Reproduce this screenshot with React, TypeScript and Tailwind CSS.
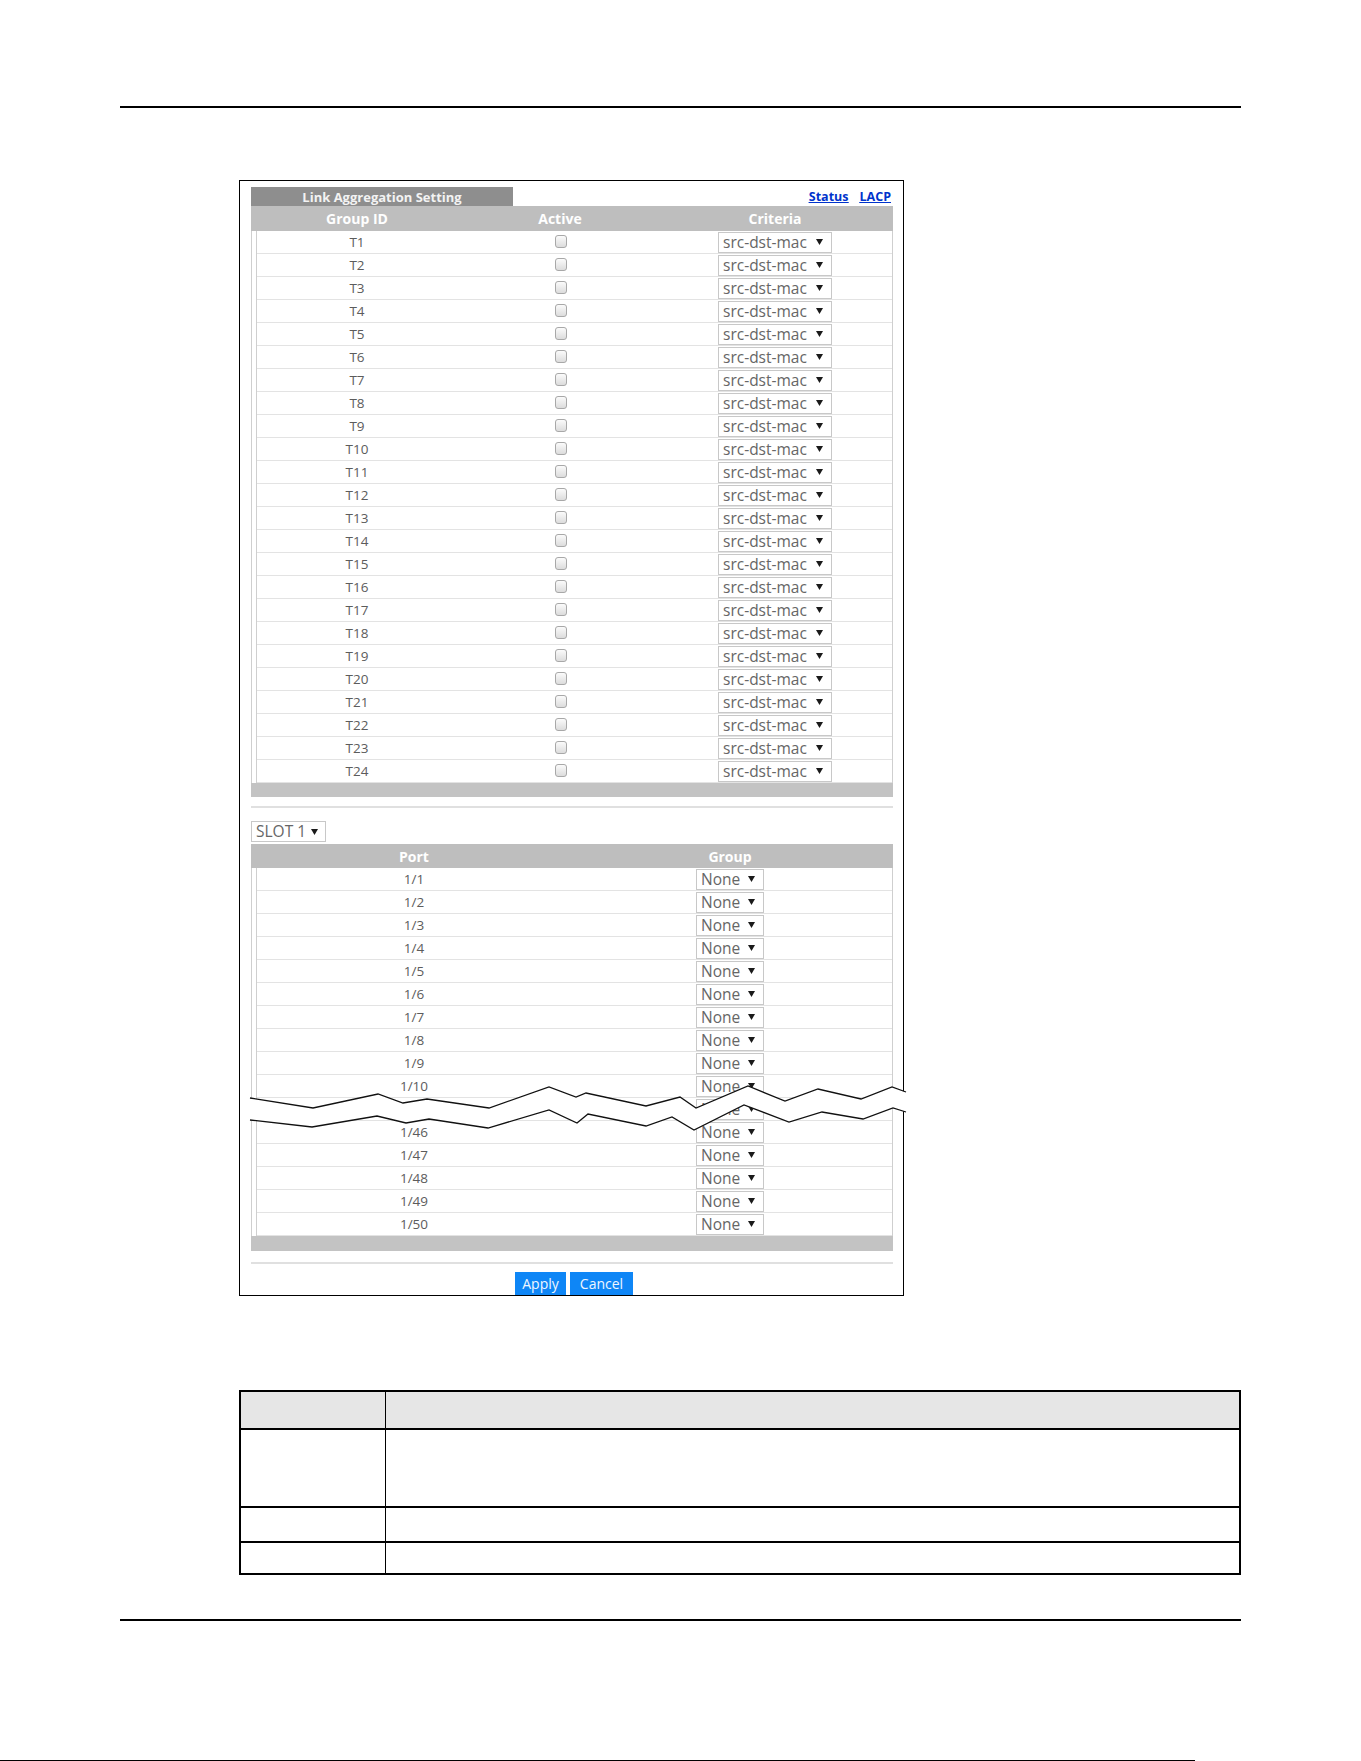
import type { ReactNode } from 'react';

const trunkGroups = Array.from({ length: 24 }, (_, i) => `T${i + 1}`);
const ports = [1, 2, 3, 4, 5, 6, 7, 8, 9, 10, 11, 46, 47, 48, 49, 50].map((n) => `1/${n}`);

// zig-zag "cut" across the port list
const upperEdge =
  '250,1098 313,1108 378,1094 403,1103 427,1099 489,1108 549,1087 576,1097 586,1093 646,1106 680,1097 696,1108 748,1086 785,1101 818,1089 861,1099 892,1087 906,1092';
const lowerEdge =
  '250,1120 312,1127 377,1116 406,1123 429,1119 488,1128 549,1110 577,1123 588,1114 646,1126 672,1117 694,1130 744,1105 789,1122 822,1112 863,1119 893,1108 906,1112';
const breakFill = `${upperEdge} ${lowerEdge.split(' ').reverse().join(' ')}`;

function Caret() {
  return (
    <svg width="7" height="6" viewBox="0 0 7 6" className="shrink-0">
      <path d="M0 0h7L3.5 6z" fill="#1a1a1a" />
    </svg>
  );
}

function Dropdown({ value, className }: { value: string; className: string }) {
  return (
    <div
      className={`flex h-[21px] items-center border border-[#c8c8c8] bg-white pl-[4px] leading-none text-[#666] ${className}`}
    >
      <span className="pt-[1px] text-[15.5px]">{value}</span>
      <Caret />
    </div>
  );
}

function Checkbox() {
  return (
    <div className="mb-[1px] h-[13px] w-[12px] rounded-[3px] border border-[#a8a8a8] bg-gradient-to-b from-[#fbfbfb] to-[#dcdcdc]" />
  );
}

function RowFrame({ children }: { children: ReactNode }) {
  return (
    <div className="border-x border-[#cfcfcf]">
      <div className="ml-[4px] border-l border-[#cfcfcf]">{children}</div>
    </div>
  );
}

export default function App() {
  return (
    <div className="relative h-[1761px] w-[1361px] overflow-hidden bg-white pt-[106px] font-['Open_Sans',sans-serif]">
      <div className="ml-[120px] h-[2px] w-[1121px] bg-black" />

      {/* settings panel */}
      <div className="ml-[239px] mt-[72px] w-[665px] border border-black pb-0 pl-[11px] pr-[10px] pt-[6px]">
        <div className="flex h-[19px] items-center justify-between">
          <div className="flex h-[19px] w-[262px] items-center justify-center bg-[#8e8e8e] pt-[1px] text-[13px] font-bold leading-none text-[#f3f3f3]">
            Link Aggregation Setting
          </div>
          <div className="flex gap-[11px] pr-[2px] pt-[1px] text-[12.5px] font-bold leading-none text-[#0033cc] underline">
            <a href="#status">Status</a>
            <a href="#lacp">LACP</a>
          </div>
        </div>

        <div className="grid h-[25px] grid-cols-[212px_194px_1fr] items-center bg-[#bebebe] pt-[1px] text-center text-[14px] font-bold leading-none text-white">
          <span>Group ID</span>
          <span>Active</span>
          <span>Criteria</span>
        </div>
        <RowFrame>
          {trunkGroups.map((id) => (
            <div
              key={id}
              className="grid h-[23px] grid-cols-[200px_208px_1fr] items-center border-b border-[#e3e3e3]"
            >
              <span className="pt-[2px] text-center text-[13.5px] leading-none text-[#5c5c5c]">{id}</span>
              <div className="flex justify-center">
                <Checkbox />
              </div>
              <Dropdown value="src-dst-mac" className="ml-[53px] w-[114px] gap-[9px]" />
            </div>
          ))}
        </RowFrame>
        <div className="h-[14px] bg-[#c3c3c3]" />

        <div className="mt-[9px] h-[2px] bg-[#e0e0e0]" />

        <Dropdown value="SLOT 1" className="mt-[13px] h-[20px] w-[75px] gap-[5px]" />

        <div className="mt-[2px] grid h-[24px] grid-cols-[326px_306px_1fr] items-center bg-[#bebebe] pt-[1px] text-center text-[14px] font-bold leading-none text-white">
          <span>Port</span>
          <span>Group</span>
        </div>
        <RowFrame>
          {ports.map((port) => (
            <div
              key={port}
              className="grid h-[23px] grid-cols-[314px_1fr] items-center border-b border-[#e3e3e3]"
            >
              <span className="pt-[2px] text-center text-[13.5px] leading-none text-[#5c5c5c]">{port}</span>
              <Dropdown value="None" className="ml-[125px] w-[68px] gap-[8px]" />
            </div>
          ))}
        </RowFrame>
        <div className="h-[15px] bg-[#c3c3c3]" />

        <div className="mt-[11px] h-[2px] bg-[#e0e0e0]" />

        <div className="mt-[8px] flex justify-center gap-[4px] pl-[4px]">
          <button className="h-[23px] w-[51px] bg-[#0e86f6] pt-[1px] text-[14px] leading-none text-[#eef6ff]">Apply</button>
          <button className="h-[23px] w-[63px] bg-[#0e86f6] pt-[1px] text-[14px] leading-none text-[#eef6ff]">Cancel</button>
        </div>
      </div>

      {/* field description table */}
      <div className="ml-[239px] mt-[94px] w-[1002px] border-2 border-black">
        <div className="grid h-[38px] grid-cols-[145px_1fr] border-b-2 border-black bg-[#e6e6e6]">
          <div className="border-r border-black" />
          <div />
        </div>
        <div className="grid h-[78px] grid-cols-[145px_1fr] border-b-2 border-black">
          <div className="border-r border-black" />
          <div />
        </div>
        <div className="grid h-[35px] grid-cols-[145px_1fr] border-b-2 border-black">
          <div className="border-r border-black" />
          <div />
        </div>
        <div className="grid h-[30px] grid-cols-[145px_1fr]">
          <div className="border-r border-black" />
          <div />
        </div>
      </div>

      <div className="ml-[120px] mt-[44px] h-[2px] w-[1121px] bg-black" />
      <div className="mt-[139px] h-[2px] w-[1195px] bg-black" />

      <svg
        className="pointer-events-none absolute left-0 top-0"
        width="1361"
        height="1761"
        viewBox="0 0 1361 1761"
      >
        <polygon points={breakFill} fill="#fff" />
        <polyline points={upperEdge} fill="none" stroke="#111" strokeWidth="1.3" />
        <polyline points={lowerEdge} fill="none" stroke="#111" strokeWidth="1.3" />
      </svg>
    </div>
  );
}
